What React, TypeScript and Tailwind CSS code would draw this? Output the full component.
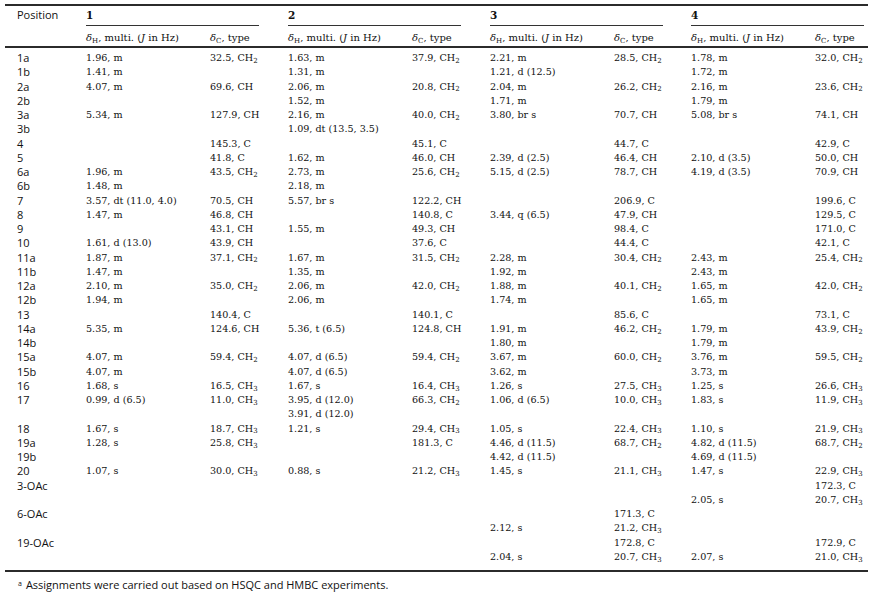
import React from "react";

// NMR data table (1H / 13C) for compounds 1–4

type Row = [string, string, string, string, string, string, string, string, string];

const rows: Row[] = [
  ["1a", "1.96, m", "32.5, CH2", "1.63, m", "37.9, CH2", "2.21, m", "28.5, CH2", "1.78, m", "32.0, CH2"],
  ["1b", "1.41, m", "", "1.31, m", "", "1.21, d (12.5)", "", "1.72, m", ""],
  ["2a", "4.07, m", "69.6, CH", "2.06, m", "20.8, CH2", "2.04, m", "26.2, CH2", "2.16, m", "23.6, CH2"],
  ["2b", "", "", "1.52, m", "", "1.71, m", "", "1.79, m", ""],
  ["3a", "5.34, m", "127.9, CH", "2.16, m", "40.0, CH2", "3.80, br s", "70.7, CH", "5.08, br s", "74.1, CH"],
  ["3b", "", "", "1.09, dt (13.5, 3.5)", "", "", "", "", ""],
  ["4", "", "145.3, C", "", "45.1, C", "", "44.7, C", "", "42.9, C"],
  ["5", "", "41.8, C", "1.62, m", "46.0, CH", "2.39, d (2.5)", "46.4, CH", "2.10, d (3.5)", "50.0, CH"],
  ["6a", "1.96, m", "43.5, CH2", "2.73, m", "25.6, CH2", "5.15, d (2.5)", "78.7, CH", "4.19, d (3.5)", "70.9, CH"],
  ["6b", "1.48, m", "", "2.18, m", "", "", "", "", ""],
  ["7", "3.57, dt (11.0, 4.0)", "70.5, CH", "5.57, br s", "122.2, CH", "", "206.9, C", "", "199.6, C"],
  ["8", "1.47, m", "46.8, CH", "", "140.8, C", "3.44, q (6.5)", "47.9, CH", "", "129.5, C"],
  ["9", "", "43.1, CH", "1.55, m", "49.3, CH", "", "98.4, C", "", "171.0, C"],
  ["10", "1.61, d (13.0)", "43.9, CH", "", "37.6, C", "", "44.4, C", "", "42.1, C"],
  ["11a", "1.87, m", "37.1, CH2", "1.67, m", "31.5, CH2", "2.28, m", "30.4, CH2", "2.43, m", "25.4, CH2"],
  ["11b", "1.47, m", "", "1.35, m", "", "1.92, m", "", "2.43, m", ""],
  ["12a", "2.10, m", "35.0, CH2", "2.06, m", "42.0, CH2", "1.88, m", "40.1, CH2", "1.65, m", "42.0, CH2"],
  ["12b", "1.94, m", "", "2.06, m", "", "1.74, m", "", "1.65, m", ""],
  ["13", "", "140.4, C", "", "140.1, C", "", "85.6, C", "", "73.1, C"],
  ["14a", "5.35, m", "124.6, CH", "5.36, t (6.5)", "124.8, CH", "1.91, m", "46.2, CH2", "1.79, m", "43.9, CH2"],
  ["14b", "", "", "", "", "1.80, m", "", "1.79, m", ""],
  ["15a", "4.07, m", "59.4, CH2", "4.07, d (6.5)", "59.4, CH2", "3.67, m", "60.0, CH2", "3.76, m", "59.5, CH2"],
  ["15b", "4.07, m", "", "4.07, d (6.5)", "", "3.62, m", "", "3.73, m", ""],
  ["16", "1.68, s", "16.5, CH3", "1.67, s", "16.4, CH3", "1.26, s", "27.5, CH3", "1.25, s", "26.6, CH3"],
  ["17", "0.99, d (6.5)", "11.0, CH3", "3.95, d (12.0)", "66.3, CH2", "1.06, d (6.5)", "10.0, CH3", "1.83, s", "11.9, CH3"],
  ["", "", "", "3.91, d (12.0)", "", "", "", "", ""],
  ["18", "1.67, s", "18.7, CH3", "1.21, s", "29.4, CH3", "1.05, s", "22.4, CH3", "1.10, s", "21.9, CH3"],
  ["19a", "1.28, s", "25.8, CH3", "", "181.3, C", "4.46, d (11.5)", "68.7, CH2", "4.82, d (11.5)", "68.7, CH2"],
  ["19b", "", "", "", "", "4.42, d (11.5)", "", "4.69, d (11.5)", ""],
  ["20", "1.07, s", "30.0, CH3", "0.88, s", "21.2, CH3", "1.45, s", "21.1, CH3", "1.47, s", "22.9, CH3"],
  ["3-OAc", "", "", "", "", "", "", "", "172.3, C"],
  ["", "", "", "", "", "", "", "2.05, s", "20.7, CH3"],
  ["6-OAc", "", "", "", "", "", "171.3, C", "", ""],
  ["", "", "", "", "", "2.12, s", "21.2, CH3", "", ""],
  ["19-OAc", "", "", "", "", "", "172.8, C", "", "172.9, C"],
  ["", "", "", "", "", "2.04, s", "20.7, CH3", "2.07, s", "21.0, CH3"],
];

const SANS = "font-['Open_Sans','Noto_Sans',sans-serif]";
const SERIF = "font-['DejaVu_Serif','Liberation_Serif',serif]";

// turns "32.5, CH2" into text with a subscripted 2/3
function Cell({ value }: { value: string }) {
  const m = value.match(/^(.*CH)([23])$/);
  if (!m) return <>{value}</>;
  return (
    <>
      {m[1]}
      <sub className="text-[7px]">{m[2]}</sub>
    </>
  );
}

function Delta({ sub }: { sub: string }) {
  return (
    <>
      <i>δ</i>
      <sub className="text-[7px]">{sub}</sub>
    </>
  );
}

export default function App() {
  const grid =
    "grid grid-cols-[81px_124px_78px_124px_78px_124px_77px_124px_53px]";

  return (
    <div className="min-h-[595px] w-[887px] bg-white text-[#111]">
      <div className="ml-[5px] w-[863px] pt-[4px]">
        <div className="border-t-2 border-[#2b2b2b]">
          {/* compound numbers */}
          <div className={`${grid} h-[20px]`}>
            <div className={`${SANS} pl-3 pt-[2px] text-[11px] leading-[14px]`}>
              Position
            </div>
            {["1", "2", "3", "4"].map((n) => (
              <div key={n} className="col-span-2 flex flex-col justify-between">
                <div className={`${SERIF} pt-[2px] text-[10.5px] font-bold leading-[14px]`}>
                  {n}
                </div>
                <div className="h-px w-[173px] bg-[#333]" />
              </div>
            ))}
          </div>
          {/* column labels */}
          <div className={`${grid} h-[20px] ${SERIF} text-[10px] leading-[14px]`}>
            <div />
            {[0, 1, 2, 3].map((k) => (
              <React.Fragment key={k}>
                <div className="pt-[5px]">
                  <Delta sub="H" />, multi. (<i>J</i> in Hz)
                </div>
                <div className="pt-[5px]">
                  <Delta sub="C" />, type
                </div>
              </React.Fragment>
            ))}
          </div>
        </div>
        <div className="border-t-2 border-[#2b2b2b] pt-[3px] pb-[6px]">
          {rows.map((r, i) => (
            <div key={i} className={`${grid} h-[14.25px] leading-[14.25px]`}>
              <div className={`${SANS} pl-3 text-[11px]`}>{r[0]}</div>
              {r.slice(1).map((v, j) => (
                <div key={j} className={`${SERIF} whitespace-nowrap text-[9.6px]`}>
                  <Cell value={v} />
                </div>
              ))}
            </div>
          ))}
        </div>
        <div className="border-t-2 border-[#2b2b2b] pt-[6px]">
          <p className={`${SANS} pl-[13px] text-[11px] leading-[14px]`}>
            <sup className="mr-[4px] text-[7px]">a</sup>
            Assignments were carried out based on HSQC and HMBC experiments.
          </p>
        </div>
      </div>
    </div>
  );
}
